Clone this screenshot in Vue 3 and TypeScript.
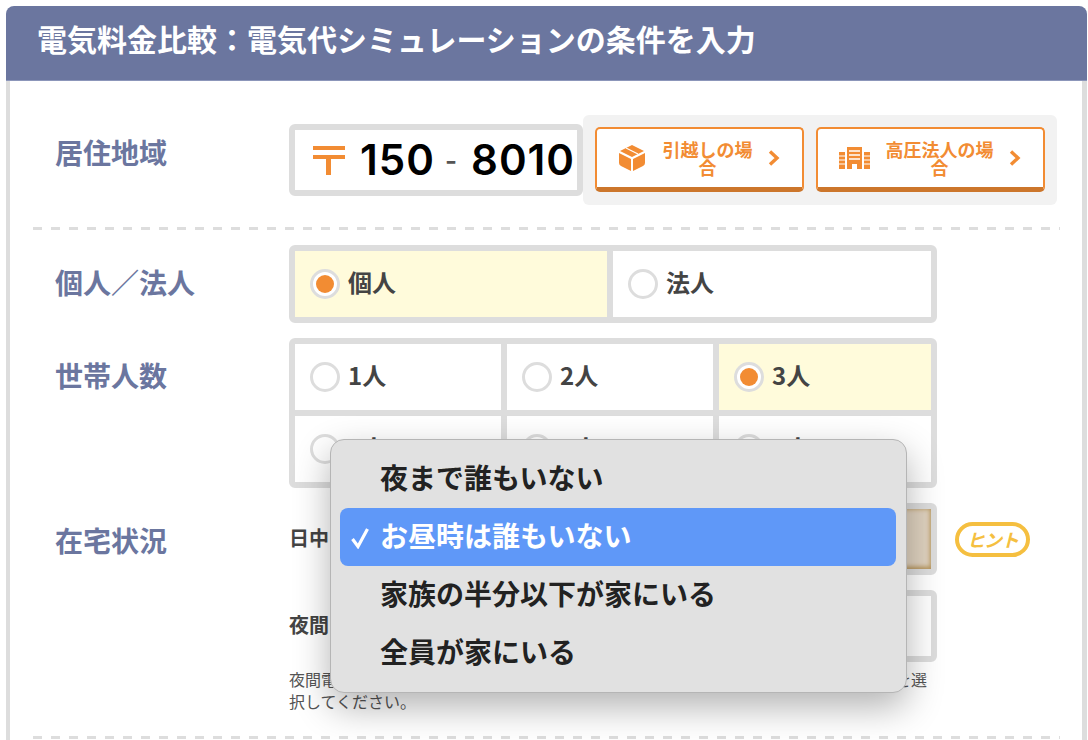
<script setup lang="ts">
interface Opt { label: string; checked?: boolean }
const kinds: Opt[] = [{ label: '個人', checked: true }, { label: '法人' }]
const people: Opt[] = [
  { label: '1人' }, { label: '2人' }, { label: '3人', checked: true },
  { label: '4人' }, { label: '5人' }, { label: '6人' },
]
const menu = ['夜まで誰もいない', 'お昼時は誰もいない', '家族の半分以下が家にいる', '全員が家にいる']
const current = 1
</script>

<template>
  <div class="page">
    <h1 class="title">電気料金比較：電気代シミュレーションの条件を入力</h1>
    <div class="card">
      <section class="section first">
        <div class="label area-label"><span>居住地域</span></div>
        <div class="zip">
          <svg class="zip-mark" viewBox="0 0 32 30" width="32" height="30">
            <rect x="0" y="1" width="32" height="4" fill="#f28c33" />
            <rect x="0" y="10" width="32" height="4" fill="#f28c33" />
            <rect x="13" y="10" width="5" height="20" fill="#f28c33" />
          </svg>
          <span class="zip-num">150</span>
          <span class="zip-dash">-</span>
          <span class="zip-num">8010</span>
        </div>
        <div class="links">
          <a class="link link-move">
            <svg viewBox="0 0 26 26" width="26" height="26">
              <path d="M13 0 25 6 13 12 1 6Z" fill="#f28c33" />
              <path d="M0 8 12 14V26L2 21Q0 20 0 18Z" fill="#f28c33" />
              <path d="M26 8 14 14V26L24 21Q26 20 26 18Z" fill="#f28c33" />
              <path d="M7 3 19 9" stroke="#fff" stroke-width="1.2" fill="none" />
            </svg>
            <span class="link-text w5">引越しの場合</span>
            <svg class="chev" viewBox="0 0 12 16" width="12" height="16">
              <path d="M2 1.5 9 8 2 14.5" fill="none" stroke="#f28c33" stroke-width="3.4" />
            </svg>
          </a>
          <a class="link link-corp">
            <svg viewBox="0 0 31 22" width="31" height="22">
              <path d="M8 0H23V22H18V17H13V22H8Z" fill="#f28c33" />
              <path d="M10 4H21M10 8H21M10 12H21" stroke="#fff" stroke-width="1.4" />
              <path d="M0 5H6V22H0ZM25 5H31V22H25Z" fill="#f28c33" />
              <path d="M0 9H6M0 13H6M0 17H6M25 9H31M25 13H31M25 17H31" stroke="#fff" stroke-width="1.2" />
            </svg>
            <span class="link-text w6">高圧法人の場合</span>
            <svg class="chev" viewBox="0 0 12 16" width="12" height="16">
              <path d="M2 1.5 9 8 2 14.5" fill="none" stroke="#f28c33" stroke-width="3.4" />
            </svg>
          </a>
        </div>
      </section>

      <div class="dash"></div>

      <section class="stack">
        <div class="section">
          <div class="label h78"><span>個人／法人</span></div>
          <div class="group cols-2">
            <label v-for="o in kinds" :key="o.label" class="cell" :class="{ on: o.checked }">
              <span class="radio"></span><span class="opt">{{ o.label }}</span>
            </label>
          </div>
        </div>

        <div class="section">
          <div class="label h78"><span>世帯人数</span></div>
          <div class="group cols-3">
            <label v-for="o in people" :key="o.label" class="cell" :class="{ on: o.checked }">
              <span class="radio"></span><span class="opt">{{ o.label }}</span>
            </label>
          </div>
        </div>

        <div class="section">
          <div class="label h72 home-label"><span>在宅状況</span></div>
          <div class="home">
            <div class="home-row">
              <span class="sub">日中</span>
              <div class="select active">お昼時は誰もいない</div>
              <span class="hint">ヒント</span>
            </div>
            <div class="home-row">
              <span class="sub">夜間</span>
              <div class="select">全員が家にいる</div>
            </div>
            <p class="note">夜間電気の使用量によって最適な料金プランが変わりますので、おおよその在宅状況を選択してください。</p>

            <ul class="menu">
              <li v-for="(m, i) in menu" :key="m" class="menu-item" :class="{ current: i === current }">
                <svg v-if="i === current" class="check" viewBox="0 0 20 22" width="20" height="22">
                  <path d="M2.5 12 8 19.5 17.5 2" fill="none" stroke="#fff" stroke-width="3.2" />
                </svg>
                {{ m }}
              </li>
            </ul>
          </div>
        </div>
      </section>

      <div class="dash last"></div>
    </div>
  </div>
</template>

<style>
html, body { margin: 0; background: #fff; overflow: hidden; }
</style>

<style scoped>
.page {
  width: 1088px;
  height: 740px;
  box-sizing: border-box;
  padding: 6px 0 0 6px;
  overflow: hidden;
  background: #fff;
  font-family: "Noto Sans CJK JP", "Noto Sans", sans-serif;
  color: #444;
}
.title {
  margin: 0;
  width: 1081px;
  height: 75px;
  padding-left: 31px;
  box-sizing: border-box;
  background: #6b769f;
  border-bottom: 1px solid #8c96ba;
  border-radius: 8px 8px 0 0;
  color: #fff;
  font-size: 30px;
  font-weight: 700;
  line-height: 65px;
  white-space: nowrap;
}
.card {
  width: 1081px;
  box-sizing: border-box;
  height: 659px;
  border-left: 4px solid #ddd;
  border-right: 5px solid #ddd;
  padding: 34px 22px 0 23px;
}
.section { display: flex; align-items: flex-start; }
.first { height: 112px; }
.label {
  width: 256px;
  flex: none;
  padding-left: 22px;
  box-sizing: border-box;
  display: flex;
  align-items: center;
  color: #6b769f;
  font-size: 28px;
  font-weight: 700;
}
.label span { margin-bottom: 4px; }
.area-label { height: 76px; }
.area-label span { margin-bottom: 2px; }
.h78 { height: 78px; }
.h72 { height: 72px; }
.home-label span { margin-bottom: 0; margin-top: 2px; }
.zip {
  width: 294px;
  height: 72px;
  margin-top: 9px;
  box-sizing: border-box;
  border: 6px solid #ddd;
  border-radius: 6px;
  display: flex;
  align-items: center;
  padding-left: 18px;
  color: #000;
  flex: none;
}
.zip-mark { margin-right: 15px; }
.zip-num {
  font-family: Inter, sans-serif;
  font-size: 42px;
  font-weight: 600;
  line-height: 1;
  letter-spacing: 1px;
}
.zip-dash {
  margin: 0 14px 0 10px;
  font-family: Inter, sans-serif;
  font-size: 26px;
  font-weight: 600;
  color: #555;
}
.links {
  flex: none;
  width: 474px;
  height: 90px;
  box-sizing: border-box;
  padding: 12px;
  display: flex;
  gap: 12px;
  background: #f2f2f2;
  border-radius: 6px;
}
.link {
  height: 65px;
  box-sizing: border-box;
  display: flex;
  align-items: center;
  background: #fff;
  border: 2px solid #f28c33;
  border-bottom: 5px solid #cc762b;
  border-radius: 5px;
  color: #f28c33;
}
.link-move { width: 209px; padding-left: 22px; }
.link-corp { width: 229px; padding-left: 21px; }
.link-text {
  font-size: 18px;
  font-weight: 700;
  line-height: 18px;
  text-align: center;
  flex: none;
}
.w5 { width: 91px; margin-left: 17px; }
.w6 { width: 109px; margin-left: 15px; }
.chev { margin-left: 15px; }
.dash {
  height: 3px;
  background: repeating-linear-gradient(90deg, #ddd 0 9px, transparent 9px 18px);
}
.stack {
  margin-top: 15px;
  display: flex;
  flex-direction: column;
  gap: 15px;
}
.group {
  width: 648px;
  box-sizing: border-box;
  display: grid;
  gap: 6px;
  background: #ddd;
  border: 6px solid #ddd;
  border-radius: 6px;
}
.cols-2 { grid-template-columns: 312px 318px; }
.cols-3 { grid-template-columns: 206px 206px 212px; }
.cell {
  height: 66px;
  display: flex;
  align-items: center;
  padding-left: 15px;
  gap: 8px;
  background: #fff;
  font-size: 24px;
  font-weight: 700;
  color: #444;
}
.opt { margin-bottom: 6px; }
.cell.on { background: #fffbdb; }
.radio {
  width: 30px;
  height: 30px;
  box-sizing: border-box;
  flex: none;
  position: relative;
  border: 3px solid #ddd;
  border-radius: 50%;
  background: #fff;
}
.on .radio::after {
  content: "";
  position: absolute;
  inset: 3px;
  border-radius: 50%;
  background: #f28c33;
}
.home { position: relative; width: 741px; flex: none; }
.home-row {
  display: flex;
  align-items: center;
  margin-bottom: 15px;
}
.sub {
  width: 60px;
  flex: none;
  padding-bottom: 4px;
  box-sizing: border-box;
  font-size: 20px;
  font-weight: 700;
  color: #444;
}
.select {
  width: 588px;
  height: 72px;
  box-sizing: border-box;
  flex: none;
  border: 6px solid #ddd;
  border-radius: 6px;
  padding-left: 14px;
  display: flex;
  align-items: center;
  font-size: 22px;
  background: #fff;
}
.select.active {
  background: #e0d3c0;
  box-shadow: inset 0 -2px 5px #b8975f, inset 0 0 5px #c4a878;
}
.hint {
  margin-left: 18px;
  width: 75px;
  height: 35px;
  box-sizing: border-box;
  border: 4px solid #f5bf40;
  border-radius: 18px;
  display: flex;
  align-items: center;
  justify-content: center;
  color: #f5bf40;
  font-size: 18px;
  font-weight: 700;
  font-style: italic;
  white-space: nowrap;
  letter-spacing: -1px;
}
.note {
  width: 648px;
  margin: -9px 0 0 0;
  font-size: 16px;
  line-height: 22px;
  color: #555;
}
.menu {
  position: absolute;
  left: 41px;
  top: -64px;
  width: 577px;
  height: 254px;
  margin: 0;
  padding: 10px 10px 0 9px;
  box-sizing: border-box;
  list-style: none;
  background: #e1e1e1;
  border: 1px solid #b5b5b5;
  border-radius: 14px;
  box-shadow: 0 14px 36px rgba(0, 0, 0, 0.3);
}
.menu-item {
  position: relative;
  height: 58px;
  box-sizing: border-box;
  padding: 0 0 4px 40px;
  display: flex;
  align-items: center;
  font-size: 28px;
  font-weight: 700;
  color: #222;
  border-radius: 8px;
}
.menu-item.current {
  background: #5f98f8;
  color: #fff;
}
.check { position: absolute; left: 10px; top: 19px; }
.last { margin-top: 24px; }
</style>
